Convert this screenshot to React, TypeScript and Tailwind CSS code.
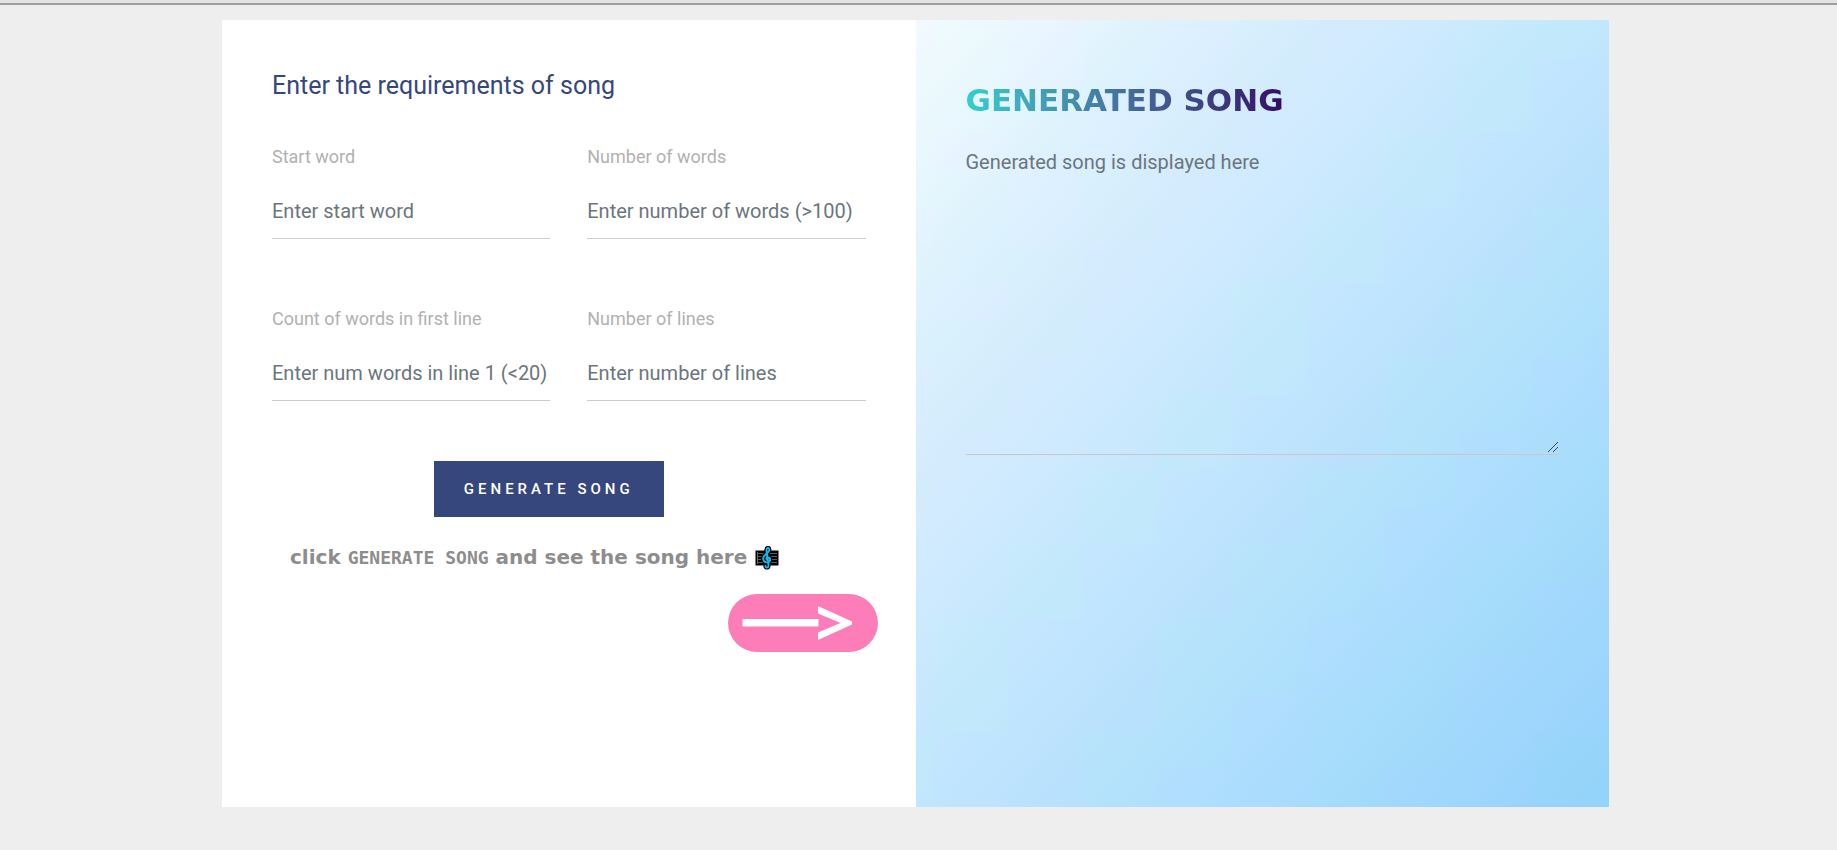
import React from "react";

type FieldProps = { id: string; label: string; placeholder: string };

function Field({ id, label, placeholder }: FieldProps) {
  return (
    <div className="flex flex-col">
      <label htmlFor={id} className="text-[18px] leading-[24px] text-[#b1b1b1]">
        {label}
      </label>
      <input
        id={id}
        type="text"
        placeholder={placeholder}
        className="mt-4 h-[54px] w-full border-b border-[#ccc] bg-transparent pb-0.5 text-[20px] text-[#495057] outline-none placeholder:text-[#6c757d]"
      />
    </div>
  );
}

// Diagonal positions (0 = top left, 1 = bottom right) where the tint flips
// between periwinkle and cyan.
const TINT_FLIPS = [0.02, 0.1, 0.13, 0.2, 0.24, 0.3, 0.43, 0.485, 0.59, 0.68, 0.745, 0.835, 0.93];

const WIDTH = 693;
const HEIGHT = 787;
const TILE_W = 75;
const TILE_H = 37.5;
const FIRST_COL = 17;

function SkyTiles() {
  const tiles: React.ReactElement[] = [];
  for (let y = 0; y < HEIGHT; y += TILE_H) {
    for (let x = FIRST_COL - TILE_W; x < WIDTH; x += TILE_W) {
      const s = ((x + TILE_W / 2) / WIDTH + (y + TILE_H / 2) / HEIGHT) / 2;
      const flips = TINT_FLIPS.filter((f) => f <= s).length;
      tiles.push(
        <rect
          key={`${x}-${y}`}
          x={x}
          y={y}
          width={TILE_W}
          height={TILE_H}
          fill={flips % 2 ? "#96ebe1" : "#bec8ff"}
        />,
      );
    }
  }
  return (
    <svg
      aria-hidden="true"
      viewBox={`0 0 ${WIDTH} ${HEIGHT}`}
      preserveAspectRatio="none"
      shapeRendering="crispEdges"
      className="absolute inset-0 h-full w-full opacity-4"
    >
      {tiles}
    </svg>
  );
}

const CLEF =
  "M12.5 13.8c-1.6-.3-1.5-2.6.3-2.6 2.8 0 3.4 4.800-.3 5.200-5 .2-5.600-5-2-7.900 2.300-1.900 4.200-3.200 3.800-5.200-.4-2-2.700-1.900-2.800.6-.1 2.500 1.700 10.800 2 15.600.1 2.600-3.200 2.600-3.100.5";

function ScoreIcon() {
  return (
    <svg viewBox="0 0 24 24" aria-hidden="true" className="h-6 w-6 shrink-0">
      <rect x="0.5" y="4.5" width="23" height="15" fill="#000" />
      <path d="M2 7.500h20M2 10.500h20M2 13.500h20M2 16.500h20" stroke="#666" strokeWidth="0.9" />
      <path d="M2.500 6v12" stroke="#666" strokeWidth="1" />
      <g fill="none" strokeLinecap="round" strokeLinejoin="round">
        <path d={CLEF} stroke="#000" strokeWidth="4.200" />
        <path d={CLEF} stroke="#18b4ea" strokeWidth="1.900" />
      </g>
    </svg>
  );
}

function ArrowPill() {
  return (
    <svg viewBox="0 0 150 58" role="img" aria-label="Result on the right" className="h-[58px] w-[150px]">
      <rect width="150" height="58" rx="29" fill="#fd7db8" />
      <rect x="14.500" y="25" width="76" height="7.500" fill="#fff" />
      <path d="M90 12l34 15.500v3L90 46v-7.500L112.500 29 90 19.500z" fill="#fff" />
    </svg>
  );
}

export default function App() {
  return (
    <div className="min-h-screen bg-[#eee] font-['Roboto',sans-serif]">
      <div className="h-[5px] border-b-2 border-[#9e9e9e] bg-[#e3e3e3]" />
      <main className="mx-auto mt-[15px] w-full max-w-[1393px] pr-1.5">
        <div className="grid min-h-[787px] grid-cols-2">
          <form className="bg-white px-[50px] pt-[50px]" onSubmit={(e) => e.preventDefault()}>
            <h1 className="text-[25px] leading-[32px] text-[#35477d]">Enter the requirements of song</h1>
            <div className="mt-[43px] grid grid-cols-2 gap-x-[37px] gap-y-[68px]">
              <Field id="start" label="Start word" placeholder="Enter start word" />
              <Field id="words" label="Number of words" placeholder="Enter number of words (>100)" />
              <Field id="first" label="Count of words in first line" placeholder="Enter num words in line 1 (<20)" />
              <Field id="lines" label="Number of lines" placeholder="Enter number of lines" />
            </div>
            <div className="mt-[60px] flex justify-center pr-10">
              <button
                type="submit"
                className="h-14 bg-[#35477d] px-[30px] text-[15px] font-medium tracking-[4px] whitespace-nowrap text-white uppercase"
              >
                Generate Song
              </button>
            </div>
            <div className="mt-6 flex items-center gap-2 pl-[18px] font-['DejaVu_Sans',sans-serif] text-[20px] leading-[32px] font-bold whitespace-nowrap text-[#8d8d8d]">
              <p>
                click <code className="font-['DejaVu_Sans_Mono',monospace] text-[18px]">GENERATE SONG</code> and see the
                song here
              </p>
              <ScoreIcon />
            </div>
            <div className="-mr-3 mt-5 flex justify-end">
              <ArrowPill />
            </div>
          </form>
          <section className="relative bg-[linear-gradient(to_bottom_right,#f6fcff_0%,#ebf8ff_10%,#dff2ff_20%,#d6edfe_30%,#ccebfe_40%,#c2e7fe_50%,#b8e3fd_60%,#afdffe_70%,#a5dbfd_80%,#9cd6fc_90%,#93d3fc_100%)]">
            <SkyTiles />
            <div className="relative flex flex-col items-start px-[50px] pt-[60px]">
              <h2 className="bg-linear-to-r from-[#30cfd0] to-[#330867] bg-clip-text font-['DejaVu_Sans',sans-serif] text-[31px] leading-[40px] font-bold whitespace-nowrap text-transparent">
                GENERATED SONG
              </h2>
              <textarea
                aria-label="Generated song"
                placeholder="Generated song is displayed here"
                className="mt-[30px] block h-[305px] w-full resize border-b border-[#cfc6c2] bg-transparent text-[20px] leading-[24px] text-[#495057] outline-none placeholder:text-[#6c757d] [&::-webkit-resizer]:bg-[linear-gradient(135deg,transparent_47%,#3f4a55_47%,#3f4a55_53%,transparent_53%,transparent_72%,#3f4a55_72%,#3f4a55_78%,transparent_78%)] [&::-webkit-resizer]:bg-[length:10px_10px] [&::-webkit-resizer]:bg-[position:4px_3px] [&::-webkit-resizer]:bg-no-repeat"
              />
            </div>
          </section>
        </div>
      </main>
    </div>
  );
}
